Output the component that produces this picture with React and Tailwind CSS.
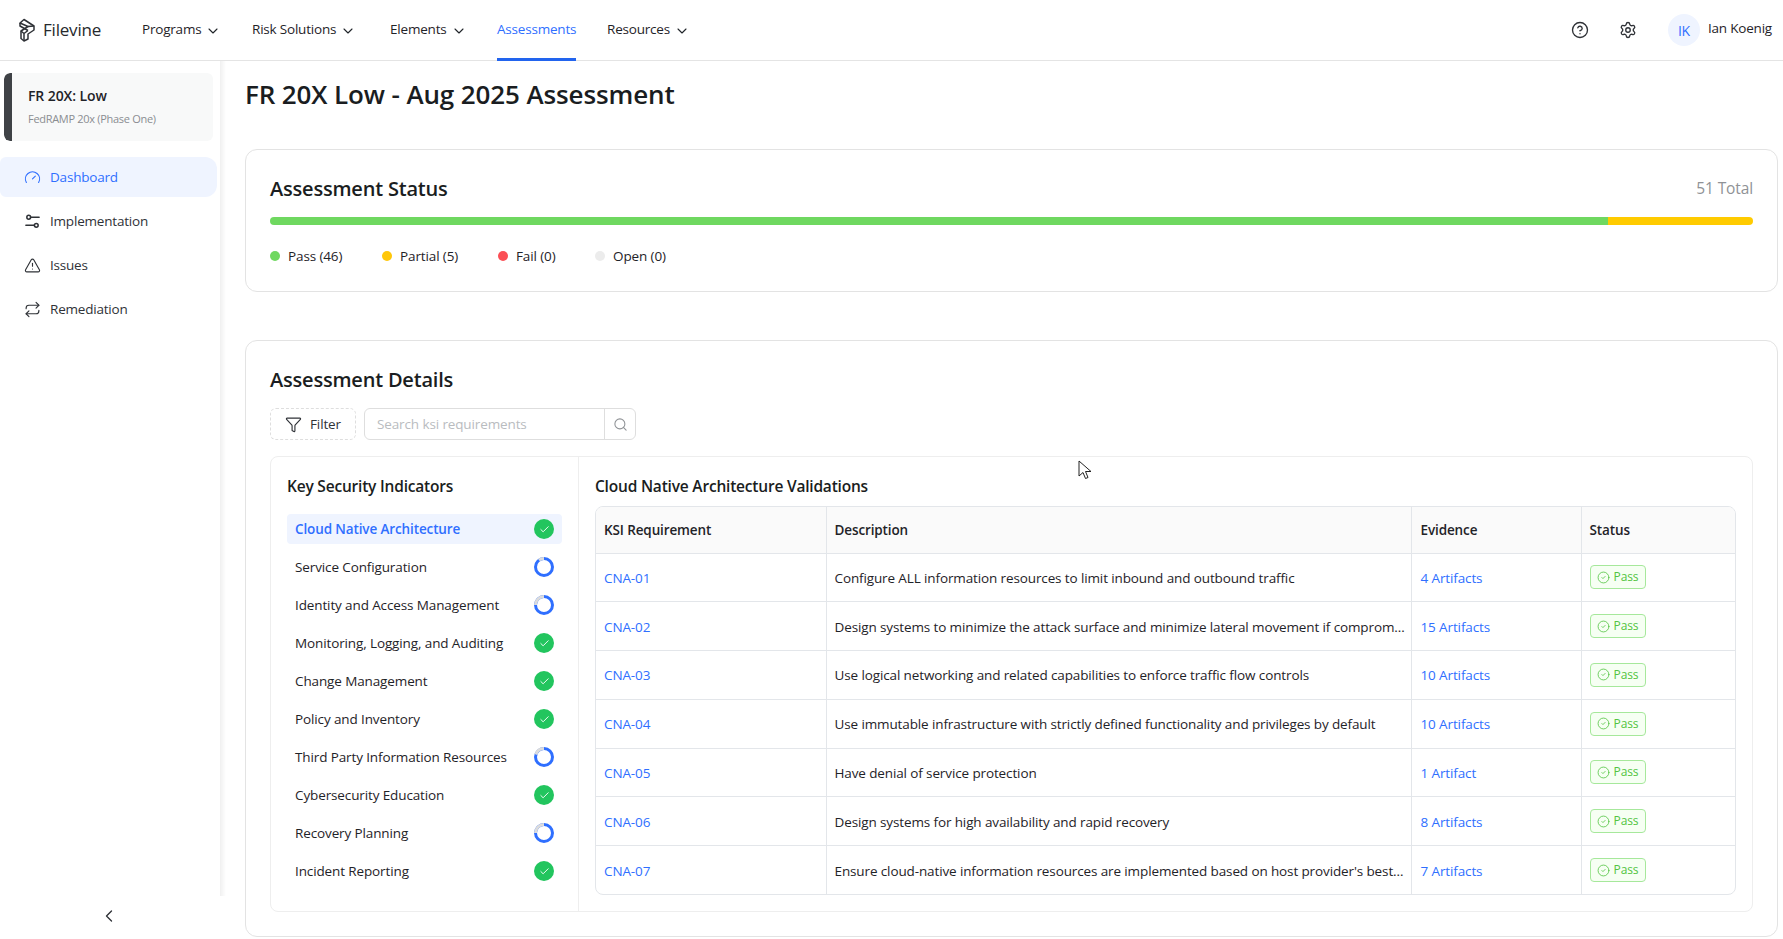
import {
  ChevronDown,
  ChevronLeft,
  CircleHelp,
  Settings,
  Gauge,
  TriangleAlert,
  Repeat,
  Filter,
  Search,
  Check,
  CircleCheck,
} from "lucide-react";

function SlidersIcon(props) {
  return (
    <svg viewBox="0 0 18 18" fill="none" stroke="currentColor" strokeWidth="1.4" strokeLinecap="round" {...props}>
      <circle cx="5" cy="4.5" r="2" />
      <path d="M7 4.5h9" />
      <circle cx="13" cy="13" r="2" />
      <path d="M2 13h9" />
    </svg>
  );
}

const navItems = [
  { label: "Programs", x: "w-[110px]", caret: true },
  { label: "Risk Solutions", x: "w-[138px]", caret: true },
  { label: "Elements", x: "w-[107px]", caret: true },
  { label: "Assessments", x: "w-[110px]", active: true },
  { label: "Resources", x: "w-[90px]", caret: true },
];

const sideItems = [
  { label: "Dashboard", icon: Gauge, active: true },
  { label: "Implementation", icon: SlidersIcon },
  { label: "Issues", icon: TriangleAlert },
  { label: "Remediation", icon: Repeat },
];

const indicators = [
  { label: "Cloud Native Architecture", done: true, active: true },
  { label: "Service Configuration", pct: 0.9 },
  { label: "Identity and Access Management", pct: 0.75 },
  { label: "Monitoring, Logging, and Auditing", done: true },
  { label: "Change Management", done: true },
  { label: "Policy and Inventory", done: true },
  { label: "Third Party Information Resources", pct: 0.8 },
  { label: "Cybersecurity Education", done: true },
  { label: "Recovery Planning", pct: 0.75 },
  { label: "Incident Reporting", done: true },
];

const rows = [
  ["CNA-01", "Configure ALL information resources to limit inbound and outbound traffic", "4 Artifacts"],
  ["CNA-02", "Design systems to minimize the attack surface and minimize lateral movement if compromised", "15 Artifacts"],
  ["CNA-03", "Use logical networking and related capabilities to enforce traffic flow controls", "10 Artifacts"],
  ["CNA-04", "Use immutable infrastructure with strictly defined functionality and privileges by default", "10 Artifacts"],
  ["CNA-05", "Have denial of service protection", "1 Artifact"],
  ["CNA-06", "Design systems for high availability and rapid recovery", "8 Artifacts"],
  ["CNA-07", "Ensure cloud-native information resources are implemented based on host provider's best practices", "7 Artifacts"],
];

function Logo() {
  return (
    <svg width="18" height="24" viewBox="0 0 18 24" fill="none" stroke="#2f3237" strokeWidth="1.5" strokeLinejoin="round">
      <path d="M2 5 6 1.5l10 6.5v4l-6 4v5l-4 2-3-2.5V13l7-4.5L2 5Z" />
      <path d="M2 5v3l8 4.5M3 13l3 2.5V23M6 15.5l4-3M10 8.5l6-.5" />
    </svg>
  );
}

function Ring({ pct }) {
  const c = 2 * Math.PI * 8.5;
  return (
    <svg width="20" height="20" viewBox="0 0 20 20" className="-rotate-90 scale-y-[-1]">
      <circle cx="10" cy="10" r="8.5" fill="none" stroke="#2f6fff" strokeWidth="3" />
      <circle
        cx="10"
        cy="10"
        r="8.5"
        fill="none"
        stroke="#dcdcdc"
        strokeWidth="3"
        strokeDasharray={`${c * (1 - pct)} ${c}`}
      />
    </svg>
  );
}

function Dot({ color, label, className }) {
  return (
    <div className={`flex items-center ${className}`}>
      <span className={`h-[10px] w-[10px] rounded-full ${color}`} />
      <span className="ml-2">{label}</span>
    </div>
  );
}

export default function App() {
  return (
    <div className="relative flex h-[939px] w-[1783px] flex-col overflow-hidden bg-white font-['Open_Sans',sans-serif] text-[13.5px] tracking-[-0.12px] text-[#1f2328]">
      <header className="flex h-[61px] shrink-0 items-stretch border-b border-[#e4e4e4] tracking-[-0.2px]">
        <div className="flex w-[142px] items-center pl-[18px]">
          <Logo />
          <span className="ml-[7px] text-[17px] text-[#26292d]">Filevine</span>
        </div>
        {navItems.map((n) => (
          <div
            key={n.label}
            className={`flex h-[61px] items-center ${n.x} ${n.active ? "text-[#2f6fff]" : ""}`}
          >
            <span
              className={`flex h-full items-center ${n.active ? "border-b-[3px] border-[#2264ee]" : "pb-[2px]"}`}
            >
              {n.label}
            </span>
            {n.caret && <ChevronDown className="ml-1 h-4 w-4" strokeWidth={1.6} />}
          </div>
        ))}
        <div className="ml-auto flex items-center pr-[11px]">
          <CircleHelp className="h-[18px] w-[18px] text-[#2f3237]" strokeWidth={1.8} />
          <Settings className="ml-[30px] h-[18px] w-[18px] text-[#2f3237]" strokeWidth={1.8} />
          <span className="ml-[31px] flex h-8 w-8 items-center justify-center rounded-full bg-[#eff4ff] text-[14px] text-[#2f6fff]">
            IK
          </span>
          <span className="ml-2 pb-1">Ian Koenig</span>
        </div>
      </header>

      <div className="flex min-h-0 flex-1">
        <aside className="relative flex w-[220px] shrink-0 flex-col">
          <div className="absolute right-0 top-0 h-[835px] w-[6px] translate-x-full bg-gradient-to-r from-[#f0f0f0] to-white" />
          <div className="ml-1 mt-3 flex h-[68px] w-[209px] overflow-hidden rounded-md bg-[#f8f9f9]">
            <div className="w-2 rounded-l-md bg-[#3f4246]" />
            <div className="pl-4 pt-[13px]">
              <div className="text-[14px] font-semibold leading-[20px] tracking-[-0.1px]">FR 20X: Low</div>
              <div className="mt-[3px] text-[11px] leading-[20px] tracking-[-0.3px] text-[#8a8d91]">FedRAMP 20x (Phase One)</div>
            </div>
          </div>
          <nav className="mt-4">
            {sideItems.map((s) => (
              <div
                key={s.label}
                className={`mb-1 flex h-10 w-[217px] items-center rounded-r-xl rounded-l-md pl-6 tracking-[-0.2px] ${
                  s.active ? "bg-[#eff4ff] text-[#2f6fff]" : "text-[#2f3237]"
                }`}
              >
                <s.icon className="h-[17px] w-[17px]" strokeWidth={1.6} />
                <span className="ml-[9px]">{s.label}</span>
              </div>
            ))}
          </nav>
          <div className="mt-auto flex h-[33px] items-start justify-center pr-[2px]">
            <ChevronLeft className="h-5 w-5 text-[#2f3237]" strokeWidth={1.6} />
          </div>
        </aside>

        <main className="min-w-0 flex-1 pl-[25px] pr-[5px]">
          <h1 className="mt-[15px] text-[26px] font-semibold leading-9 text-[#1a1d21]">FR 20X Low - Aug 2025 Assessment</h1>

          <section className="mt-[37px] h-[143px] rounded-xl border border-[#e3e3e3] px-6 pt-[23px]">
            <div className="flex items-center justify-between">
              <h2 className="text-[20px] font-semibold leading-8 tracking-[-0.2px] text-[#1a1d21]">Assessment Status</h2>
              <span className="text-[15.5px] text-[#8f9296]">51 Total</span>
            </div>
            <div className="mt-[12px] flex h-2 overflow-hidden rounded-full">
              <div className="h-full w-[1338px] bg-[#6fd860]" />
              <div className="h-full flex-1 bg-[#ffcb00]" />
            </div>
            <div className="mt-[21px] flex items-center">
              <Dot color="bg-[#6fd860]" label="Pass (46)" className="w-[112px]" />
              <Dot color="bg-[#ffc70a]" label="Partial (5)" className="w-[116px]" />
              <Dot color="bg-[#fb4f55]" label="Fail (0)" className="w-[97px]" />
              <Dot color="bg-[#ececec]" label="Open (0)" />
            </div>
          </section>

          <section className="mt-[48px] h-[597px] rounded-xl border border-[#e3e3e3] px-6 pt-[23px]">
            <h2 className="text-[20px] font-semibold leading-8 tracking-[-0.2px] text-[#1a1d21]">Assessment Details</h2>
            <div className="mt-[12px] flex items-center gap-2">
              <button className="flex h-8 w-[86px] items-center justify-center gap-2 rounded-md border border-dashed border-[#dedede] text-[#2f3237]">
                <Filter className="h-[17px] w-[17px]" strokeWidth={1.6} />
                Filter
              </button>
              <div className="flex h-8 w-[272px] items-center rounded-md border border-[#dedede]">
                <div className="flex-1 pl-3 text-[#b9bcc0]">Search ksi requirements</div>
                <div className="flex h-full w-[31px] items-center justify-center border-l border-[#dedede]">
                  <Search className="h-[15px] w-[15px] text-[#8f9296]" strokeWidth={1.7} />
                </div>
              </div>
            </div>

            <div className="mt-[16px] flex h-[456px] rounded-lg border border-[#eeeeee]">
              <div className="w-[308px] shrink-0 border-r border-[#eeeeee] pl-4 pr-[16px] pt-[17px]">
                <h3 className="text-[15.5px] font-semibold leading-6 tracking-[-0.2px] text-[#1a1d21]">Key Security Indicators</h3>
                <ul className="mt-[16px] flex flex-col gap-2">
                  {indicators.map((it) => (
                    <li
                      key={it.label}
                      className={`flex h-[30px] items-center justify-between rounded pl-2 pr-2 ${
                        it.active ? "bg-[#eff4ff] font-semibold text-[#2f6fff]" : ""
                      }`}
                    >
                      <span className="whitespace-nowrap">{it.label}</span>
                      {it.done ? (
                        <span className="flex h-5 w-5 items-center justify-center rounded-full bg-[#22c55e]">
                          <Check className="h-[11px] w-[11px] text-white" strokeWidth={2} />
                        </span>
                      ) : (
                        <Ring pct={it.pct} />
                      )}
                    </li>
                  ))}
                </ul>
              </div>

              <div className="min-w-0 flex-1 pl-4 pr-[16px] pt-[17px]">
                <h3 className="text-[15.5px] font-semibold leading-6 tracking-[-0.2px] text-[#1a1d21]">Cloud Native Architecture Validations</h3>
                <div className="mt-[8px] overflow-hidden rounded-lg border border-[#e3e6ea]">
                  <table className="w-full table-fixed border-collapse">
                    <thead>
                      <tr className="h-[46px] bg-[#fafafa] text-left font-semibold">
                        <th className="w-[230px] border-r border-[#e3e6ea] pl-2 font-semibold">KSI Requirement</th>
                        <th className="w-[585px] border-r border-[#e3e6ea] pl-2 font-semibold">Description</th>
                        <th className="w-[170px] border-r border-[#e3e6ea] pl-[9px] font-semibold">Evidence</th>
                        <th className="pl-2 font-semibold">Status</th>
                      </tr>
                    </thead>
                    <tbody>
                      {rows.map((r) => (
                        <tr key={r[0]} className="h-[48.75px] border-t border-[#e3e6ea]">
                          <td className="border-r border-[#e3e6ea] pl-2 pt-[1px] text-[#2f6fff]">{r[0]}</td>
                          <td className="truncate border-r border-[#e3e6ea] pl-2 pr-[5px] pt-[1px]">{r[1]}</td>
                          <td className="border-r border-[#e3e6ea] pl-[9px] pt-[1px] text-[#2f6fff]">{r[2]}</td>
                          <td className="pl-2">
                            <span className="inline-flex h-6 w-[56px] items-center justify-center gap-1 rounded border border-[#a6e89b] bg-[#f6fff3] text-[12px] text-[#52c441]">
                              <CircleCheck className="h-[13px] w-[13px]" strokeWidth={1.5} />
                              Pass
                            </span>
                          </td>
                        </tr>
                      ))}
                    </tbody>
                  </table>
                </div>
              </div>
            </div>
          </section>
        </main>
      </div>

      {/* mouse pointer caught in the screenshot */}
      <svg className="absolute left-[1078px] top-[460px]" width="14" height="21" viewBox="0 0 14 21">
        <path d="M1 1v15l4-3.5 2.5 6 2.5-1-2.5-6H13L1 1Z" fill="#fff" stroke="#222" strokeWidth="1" />
      </svg>
    </div>
  );
}
